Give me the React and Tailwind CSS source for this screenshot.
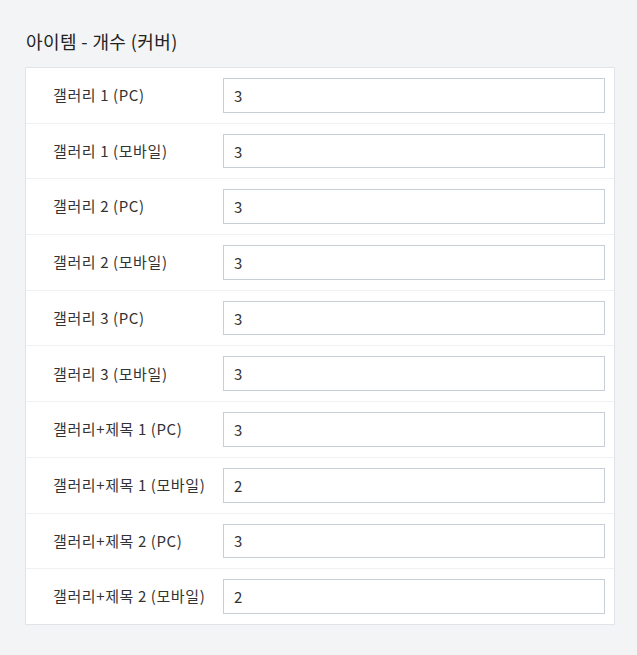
const rows = [
  { label: "갤러리 1 (PC)", value: "3" },
  { label: "갤러리 1 (모바일)", value: "3" },
  { label: "갤러리 2 (PC)", value: "3" },
  { label: "갤러리 2 (모바일)", value: "3" },
  { label: "갤러리 3 (PC)", value: "3" },
  { label: "갤러리 3 (모바일)", value: "3" },
  { label: "갤러리+제목 1 (PC)", value: "3" },
  { label: "갤러리+제목 1 (모바일)", value: "2" },
  { label: "갤러리+제목 2 (PC)", value: "3" },
  { label: "갤러리+제목 2 (모바일)", value: "2" },
];

export default function App() {
  return (
    <div
      className="min-h-[655px] bg-[#f3f4f6] pl-[25px] pr-[22px] pt-[28px] text-[#333]"
      style={{ fontFamily: '"Noto Sans CJK KR", "Noto Sans", sans-serif' }}
    >
      <h2 className="pl-px text-[18px] leading-[26px] tracking-[0.4px] text-[#222]">아이템 - 개수 (커버)</h2>
      <div className="mt-[13px] border border-[#e1e4e8] bg-white">
        {rows.map((row, i) => (
          <div
            key={i}
            className={
              "flex items-center py-[10px] pr-[9px] " +
              (i < rows.length - 1 ? "border-b border-[#f0f1f4]" : "")
            }
          >
            <label className="w-[197px] shrink-0 pl-[27px] text-[15px] tracking-[0.6px] text-[#333] whitespace-nowrap">
              {row.label}
            </label>
            <input
              type="text"
              defaultValue={row.value}
              className="h-[34.7px] min-w-0 flex-1 border border-[#c8ced6] bg-white px-[10px] text-[15px] text-[#333] outline-none"
            />
          </div>
        ))}
      </div>
    </div>
  );
}
